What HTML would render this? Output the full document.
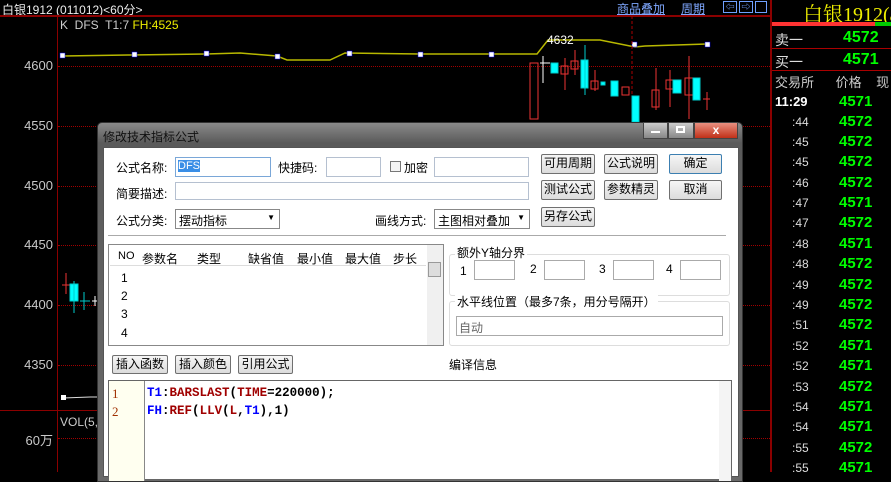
<!DOCTYPE html>
<html><head><meta charset="utf-8"><style>
*{margin:0;padding:0;box-sizing:border-box}
body{width:891px;height:472px;background:#000;position:relative;overflow:hidden;font-family:"Liberation Sans","Noto Sans CJK SC",sans-serif;font-size:12px}
.a{position:absolute;white-space:nowrap}
.ax{position:absolute;color:#c8c8c8;font-size:13px;right:838px;text-align:right}
.dl{position:absolute;left:58px;width:712px;border-top:1px dotted #a00000;height:0}
.rt{position:absolute;left:792px;color:#ddd;font-size:12px}
.rp{position:absolute;left:839px;color:#0f0;font-size:15px;font-weight:bold}
.dlg{font-size:12px;color:#000}
.inp{position:absolute;background:#fff;border:1px solid #b5c0d0}
.btn{position:absolute;background:linear-gradient(#f6f6f6,#dcdcdc);border:1px solid #707070;border-radius:2px;text-align:center;font-size:12px;line-height:17px;color:#000}
.lbl{position:absolute;font-size:12px;color:#000}
</style></head><body>
<div class="a" style="left:2px;top:1px;color:#eee;font-size:12px">白银1912 (011012)&lt;60分&gt;</div>
<div class="a" style="left:617px;top:0px;color:#7fa8ff;font-size:12px;text-decoration:underline">商品叠加</div>
<div class="a" style="left:681px;top:0px;color:#7fa8ff;font-size:12px;text-decoration:underline">周期</div>
<div class="a" style="left:723px;top:1px;width:14px;height:12px;border:1px solid #6fa0ff;color:#6fa0ff;font-size:9px;line-height:10px;text-align:center">⇦</div>
<div class="a" style="left:739px;top:1px;width:14px;height:12px;border:1px solid #6fa0ff;color:#6fa0ff;font-size:9px;line-height:10px;text-align:center">⇨</div>
<div class="a" style="left:755px;top:1px;width:12px;height:12px;border:1px solid #6fa0ff"></div>
<div class="a" style="left:0;top:15px;width:770px;height:2px;background:#8b0000"></div>
<div class="a" style="left:57px;top:16px;width:1px;height:456px;background:#8b0000"></div>
<div class="a" style="left:770px;top:0;width:2px;height:472px;background:#8b0000"></div>
<div class="a" style="left:0;top:410px;width:770px;height:1px;background:#8b0000"></div>
<div class="a" style="left:60px;top:18px;color:#ccc;font-size:12px">K&nbsp; DFS&nbsp; T1:7 <span style="color:#ee0">FH:4525</span></div>
<div class="ax" style="top:58px">4600</div><div class="dl" style="top:66px"></div>
<div class="ax" style="top:118px">4550</div><div class="dl" style="top:126px"></div>
<div class="ax" style="top:178px">4500</div><div class="dl" style="top:186px"></div>
<div class="ax" style="top:237px">4450</div><div class="dl" style="top:245px"></div>
<div class="ax" style="top:297px">4400</div><div class="dl" style="top:305px"></div>
<div class="ax" style="top:357px">4350</div><div class="dl" style="top:365px"></div>
<div class="ax" style="top:430px">60万</div><div class="dl" style="top:438px"></div>
<div class="a" style="left:60px;top:415px;color:#ccc;font-size:12px">VOL(5,</div>
<svg class="a" style="left:0;top:0" width="770" height="472">
<polyline fill="none" stroke="#b8b800" stroke-width="1.5" points="63,56 130,55 206,54 240,53 277,56 287,60 330,60 345,53 420,54 491,54 525,54 537,54 548,40 600,40 635,47 645,46 707,44"/>
<g fill="#fff" stroke="#00f" stroke-width="0.5"><rect x="60" y="53" width="5" height="5"/><rect x="132" y="52" width="5" height="5"/><rect x="204" y="51" width="5" height="5"/><rect x="275" y="54" width="5" height="5"/><rect x="347" y="51" width="5" height="5"/><rect x="418" y="52" width="5" height="5"/><rect x="489" y="52" width="5" height="5"/><rect x="632" y="42" width="5" height="5"/><rect x="705" y="42" width="5" height="5"/></g>
<text x="547" y="44" fill="#fff" font-size="12" font-family="Liberation Sans">4632</text>
<line x1="632" y1="16" x2="632" y2="130" stroke="#a00" stroke-dasharray="3,2"/>
<g stroke="#e33" fill="none"><rect x="530" y="63" width="8" height="56"/><rect x="561" y="66" width="7" height="8"/><rect x="571" y="61" width="7" height="8"/><rect x="591" y="81" width="7" height="8"/><rect x="622" y="87" width="7" height="8"/><rect x="652" y="90" width="7" height="17"/><rect x="666" y="80" width="7" height="9"/><rect x="685" y="78" width="8" height="17"/><line x1="565" y1="58" x2="565" y2="90"/><line x1="575" y1="50" x2="575" y2="75"/><line x1="595" y1="70" x2="595" y2="91"/><line x1="656" y1="68" x2="656" y2="110"/><line x1="670" y1="70" x2="670" y2="107"/><line x1="689" y1="56" x2="689" y2="119"/><line x1="703" y1="99" x2="710" y2="99"/><line x1="707" y1="92" x2="707" y2="110"/><line x1="62" y1="285" x2="70" y2="285"/><line x1="66" y1="273" x2="66" y2="294"/></g>
<g fill="#0ff" stroke="#0cc"><rect x="551" y="63" width="7" height="10"/><rect x="581" y="60" width="7" height="28"/><rect x="601" y="82" width="4" height="3"/><rect x="611" y="81" width="7" height="15"/><rect x="632" y="96" width="7" height="26"/><rect x="673" y="80" width="8" height="13"/><rect x="693" y="78" width="7" height="22"/><rect x="70" y="284" width="8" height="17"/><line x1="585" y1="45" x2="585" y2="95"/><line x1="74" y1="281" x2="74" y2="313"/><line x1="80" y1="301" x2="90" y2="301"/><line x1="84" y1="292" x2="84" y2="310"/></g>
<line x1="540" y1="63" x2="550" y2="63" stroke="#fff"/><line x1="543" y1="56" x2="543" y2="83" stroke="#fff"/>
<line x1="92" y1="301" x2="98" y2="301" stroke="#fff"/><line x1="95" y1="296" x2="95" y2="306" stroke="#fff"/>
<polyline fill="none" stroke="#ddd" points="63,398 90,397 97,397"/><rect x="61" y="395" width="5" height="5" fill="#fff"/>
</svg>
<div class="a" style="left:803px;top:-2px;color:#ee0;font-size:20px;font-family:'Liberation Serif','Noto Serif CJK SC',serif">白银1912(a</div>
<div class="a" style="left:772px;top:22px;width:103px;height:4px;background:#f33"></div>
<div class="a" style="left:875px;top:22px;width:16px;height:4px;background:#0c0"></div>
<div class="a" style="left:772px;top:48px;width:119px;height:1px;background:#a00"></div>
<div class="a" style="left:772px;top:70px;width:119px;height:1px;background:#a00"></div>
<div class="a" style="left:775px;top:30px;color:#ddd;font-size:14px">卖一</div>
<div class="a" style="left:843px;top:29px;color:#0f0;font-size:16px;font-weight:bold">4572</div>
<div class="a" style="left:775px;top:52px;color:#ddd;font-size:14px">买一</div>
<div class="a" style="left:843px;top:51px;color:#0f0;font-size:16px;font-weight:bold">4571</div>
<div class="a" style="left:775px;top:72px;color:#ccc;font-size:13px">交易所&nbsp;&nbsp;&nbsp;&nbsp;&nbsp;&nbsp;价格&nbsp;&nbsp;&nbsp;&nbsp;现</div>
<div class="a" style="left:775px;top:94px;color:#fff;font-size:13px;font-weight:bold">11:29</div>
<div class="rp" style="top:93px">4571</div>
<div class="rt" style="top:115px">:44</div><div class="rp" style="top:113px">4572</div>
<div class="rt" style="top:135px">:45</div><div class="rp" style="top:133px">4572</div>
<div class="rt" style="top:155px">:45</div><div class="rp" style="top:153px">4572</div>
<div class="rt" style="top:176px">:46</div><div class="rp" style="top:174px">4572</div>
<div class="rt" style="top:196px">:47</div><div class="rp" style="top:194px">4571</div>
<div class="rt" style="top:216px">:47</div><div class="rp" style="top:214px">4572</div>
<div class="rt" style="top:237px">:48</div><div class="rp" style="top:235px">4571</div>
<div class="rt" style="top:257px">:48</div><div class="rp" style="top:255px">4572</div>
<div class="rt" style="top:278px">:49</div><div class="rp" style="top:276px">4572</div>
<div class="rt" style="top:298px">:49</div><div class="rp" style="top:296px">4572</div>
<div class="rt" style="top:318px">:51</div><div class="rp" style="top:316px">4572</div>
<div class="rt" style="top:339px">:52</div><div class="rp" style="top:337px">4571</div>
<div class="rt" style="top:359px">:52</div><div class="rp" style="top:357px">4571</div>
<div class="rt" style="top:380px">:53</div><div class="rp" style="top:378px">4572</div>
<div class="rt" style="top:400px">:54</div><div class="rp" style="top:398px">4571</div>
<div class="rt" style="top:420px">:54</div><div class="rp" style="top:418px">4571</div>
<div class="rt" style="top:441px">:55</div><div class="rp" style="top:439px">4572</div>
<div class="rt" style="top:461px">:55</div><div class="rp" style="top:459px">4571</div>
<div class="a dlg" style="left:97px;top:122px;width:646px;height:360px;background:linear-gradient(#8a8a8a,#5a5a5a 20px,#6a6a6a);border:1px solid #333;border-radius:5px 5px 0 0"></div>
<div class="a" style="left:103px;top:128px;color:#111;font-size:12px">修改技术指标公式</div>
<div class="a" style="left:643px;top:122px;width:25px;height:17px;background:linear-gradient(#ccc,#888);border:1px solid #444"></div>
<div class="a" style="left:651px;top:131px;width:9px;height:2px;background:#fff"></div>
<div class="a" style="left:668px;top:122px;width:26px;height:17px;background:linear-gradient(#ccc,#888);border:1px solid #444"></div>
<div class="a" style="left:676px;top:126px;width:9px;height:7px;border:2px solid #fff"></div>
<div class="a" style="left:694px;top:122px;width:44px;height:17px;background:linear-gradient(#e89080,#c03018);border:1px solid #444;color:#fff;font-weight:bold;text-align:center;line-height:15px">x</div>
<div class="a dlg" style="left:103px;top:147px;width:636px;height:330px;background:#fff;border:1px solid #555"></div>
<div class="lbl" style="left:116px;top:159px">公式名称:</div>
<div class="inp" style="left:175px;top:157px;width:96px;height:20px;border-color:#7aa7d8"><span style="background:#3a8ee6;color:#fff;font-size:11px;margin-left:2px">DFS</span></div>
<div class="lbl" style="left:278px;top:159px">快捷码:</div>
<div class="inp" style="left:326px;top:157px;width:55px;height:20px"></div>
<div class="a" style="left:390px;top:161px;width:11px;height:11px;border:1px solid #777;background:#f4f4f4"></div>
<div class="lbl" style="left:404px;top:159px">加密</div>
<div class="inp" style="left:434px;top:157px;width:95px;height:20px"></div>
<div class="btn" style="left:541px;top:154px;width:54px;height:20px">可用周期</div>
<div class="btn" style="left:604px;top:154px;width:54px;height:20px">公式说明</div>
<div class="btn" style="left:669px;top:154px;width:53px;height:20px;border-color:#3c7fb1">确定</div>
<div class="lbl" style="left:116px;top:185px">简要描述:</div>
<div class="inp" style="left:175px;top:182px;width:354px;height:18px"></div>
<div class="btn" style="left:541px;top:180px;width:54px;height:20px">测试公式</div>
<div class="btn" style="left:604px;top:180px;width:54px;height:20px">参数精灵</div>
<div class="btn" style="left:669px;top:180px;width:53px;height:20px">取消</div>
<div class="lbl" style="left:116px;top:212px">公式分类:</div>
<div class="inp" style="left:175px;top:209px;width:105px;height:20px;border-color:#888;padding:2px 3px">摆动指标<span style="position:absolute;right:4px;top:3px;font-size:8px">▼</span></div>
<div class="lbl" style="left:375px;top:212px">画线方式:</div>
<div class="inp" style="left:434px;top:209px;width:96px;height:20px;border-color:#888;padding:2px 3px">主图相对叠加<span style="position:absolute;right:4px;top:3px;font-size:8px">▼</span></div>
<div class="btn" style="left:541px;top:207px;width:54px;height:20px">另存公式</div>
<div class="a" style="left:108px;top:235px;width:618px;height:2px;border-top:1px solid #aaa;border-bottom:1px solid #fff"></div>
<div class="a" style="left:108px;top:244px;width:336px;height:102px;border:1px solid #888;background:#fff"></div>
<div class="a" style="left:427px;top:245px;width:16px;height:100px;background:#f0f0f0"></div>
<div class="a" style="left:428px;top:262px;width:13px;height:15px;background:#ddd;border:1px solid #999"></div>
<div class="a" style="left:118px;top:250px;font-size:11px">NO</div>
<div class="lbl" style="left:142px;top:250px">参数名</div>
<div class="lbl" style="left:197px;top:250px">类型</div>
<div class="lbl" style="left:248px;top:250px">缺省值</div>
<div class="lbl" style="left:297px;top:250px">最小值</div>
<div class="lbl" style="left:345px;top:250px">最大值</div>
<div class="lbl" style="left:393px;top:250px">步长</div>
<div class="a" style="left:110px;top:265px;width:316px;height:1px;background:#ddd"></div>
<div class="lbl" style="left:121px;top:271px">1</div>
<div class="lbl" style="left:121px;top:289px">2</div>
<div class="lbl" style="left:121px;top:307px">3</div>
<div class="lbl" style="left:121px;top:326px">4</div>
<div class="a" style="left:449px;top:254px;width:281px;height:42px;border:1px solid #ddd;border-radius:3px"></div>
<div class="lbl" style="left:455px;top:244px;background:#fff;padding:0 2px">额外Y轴分界</div>
<div class="lbl" style="left:460px;top:264px">1</div><div class="inp" style="left:474px;top:260px;width:41px;height:20px;border-color:#aaa"></div>
<div class="lbl" style="left:530px;top:262px">2</div><div class="inp" style="left:544px;top:260px;width:41px;height:20px;border-color:#aaa"></div>
<div class="lbl" style="left:599px;top:262px">3</div><div class="inp" style="left:613px;top:260px;width:41px;height:20px;border-color:#aaa"></div>
<div class="lbl" style="left:666px;top:262px">4</div><div class="inp" style="left:680px;top:260px;width:41px;height:20px;border-color:#aaa"></div>
<div class="a" style="left:449px;top:301px;width:281px;height:45px;border:1px solid #ddd;border-radius:3px"></div>
<div class="lbl" style="left:455px;top:293px;background:#fff;padding:0 2px">水平线位置（最多7条，用分号隔开）</div>
<div class="inp" style="left:456px;top:316px;width:267px;height:20px;border-color:#aaa;color:#666;padding:2px 2px">自动</div>
<div class="btn" style="left:112px;top:355px;width:56px;height:19px">插入函数</div>
<div class="btn" style="left:175px;top:355px;width:56px;height:19px">插入颜色</div>
<div class="btn" style="left:238px;top:355px;width:55px;height:19px">引用公式</div>
<div class="lbl" style="left:449px;top:356px">编译信息</div>
<div class="a" style="left:108px;top:380px;width:624px;height:100px;border:1px solid #666;background:#fff"></div>
<div class="a" style="left:109px;top:381px;width:36px;height:100px;background:#fffff0;border-right:1px solid #888"></div>
<div class="a" style="left:719px;top:381px;width:12px;height:100px;background:#f4f4f4"></div>
<div class="a" style="left:112px;top:386px;color:#a03000;font-size:13px;font-family:'Liberation Serif',serif">1</div>
<div class="a" style="left:112px;top:404px;color:#a03000;font-size:13px;font-family:'Liberation Serif',serif">2</div>
<div class="a" style="left:147px;top:386px;font-family:'Liberation Mono',monospace;font-size:12.5px;font-weight:bold;color:#000"><span style="color:#00f">T1</span>:<span style="color:#a00000">BARSLAST</span>(<span style="color:#a00000">TIME</span>=220000);</div>
<div class="a" style="left:147px;top:404px;font-family:'Liberation Mono',monospace;font-size:12.5px;font-weight:bold;color:#000"><span style="color:#00f">FH</span>:<span style="color:#a00000">REF</span>(<span style="color:#a00000">LLV</span>(<span style="color:#a00000">L</span>,<span style="color:#00f">T1</span>),1)</div>
</body></html>
